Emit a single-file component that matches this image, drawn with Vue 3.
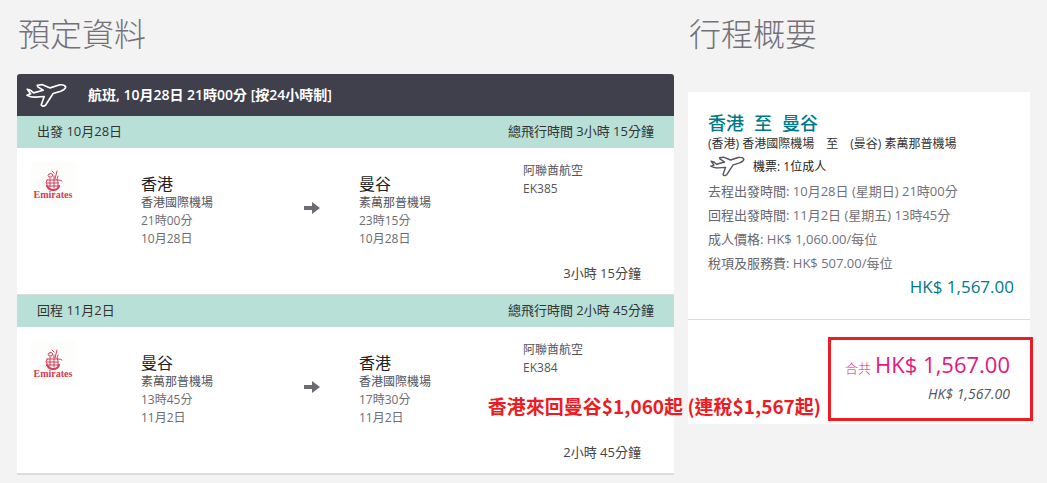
<script setup>
const PLANE = 'M34 56 L45 60 L53 67 L82 59 L66 49 L64 44 L78 42 L103 52 L130 43 Q147 41 150 49 Q149 57 135 62 L112 69 L90 103 Q81 111 76 104 L85 78 L58 80 Q45 81 33 74 L44 70 Z'

const segments = [
    {
        label: '出發 10月28日',
        duration: '3小時 15分鐘',
        airline: '阿聯酋航空',
        flight: 'EK385',
        from: { city: '香港', airport: '香港國際機場', time: '21時00分', date: '10月28日' },
        to: { city: '曼谷', airport: '素萬那普機場', time: '23時15分', date: '10月28日' },
    },
    {
        label: '回程 11月2日',
        duration: '2小時 45分鐘',
        airline: '阿聯酋航空',
        flight: 'EK384',
        from: { city: '曼谷', airport: '素萬那普機場', time: '13時45分', date: '11月2日' },
        to: { city: '香港', airport: '香港國際機場', time: '17時30分', date: '11月2日' },
    },
]

const details = [
    { label: '去程出發時間:', value: '10月28日 (星期日) 21時00分' },
    { label: '回程出發時間:', value: '11月2日 (星期五) 13時45分' },
    { label: '成人價格:', value: 'HK$ 1,060.00/每位' },
    { label: '稅項及服務費:', value: 'HK$ 507.00/每位' },
]
</script>

<template>
    <main class="page">
        <section class="booking">
            <h1 class="heading">預定資料</h1>

            <header class="flight-head">
                <svg class="plane" viewBox="30 38 124 74" aria-hidden="true">
                    <path :d="PLANE" />
                </svg>
                <h2 class="flight-title">航班, 10月28日 21時00分 [按24小時制]</h2>
            </header>

            <article v-for="seg in segments" :key="seg.flight" class="segment">
                <div class="band">
                    <span>{{ seg.label }}</span>
                    <span>總飛行時間 {{ seg.duration }}</span>
                </div>
                <div class="segment-body">
                    <div class="route">
                        <svg class="logo" viewBox="0 0 45 45" role="img" aria-label="Emirates">
                            <rect width="45" height="45" fill="#fdfefc" />
                            <g fill="none" stroke="#d63a55" stroke-linecap="round">
                                <path d="M26 9 L24 17 M21 9 L23 11 M18 12 Q20 10 22 13 Q21 16 18 15 Q16 14 18 12" />
                                <path d="M16 18 H27 Q30 18 31 19 M16 18 Q14 21 16 23 M19 16 V25 M23 14 V26" />
                                <path d="M27 14 Q25 17 27 20 V25 M16 21 H27 M16 24 H28" />
                                <path d="M16 24 Q18 28 22 28 Q27 28 28 24" stroke-width="2" />
                            </g>
                            <text x="22" y="36" text-anchor="middle" class="logo-text">Emirates</text>
                        </svg>
                        <div class="stop">
                            <strong class="city">{{ seg.from.city }}</strong>
                            <span class="airport">{{ seg.from.airport }}</span>
                            <span>{{ seg.from.time }}</span>
                            <span>{{ seg.from.date }}</span>
                        </div>
                        <svg class="arrow" viewBox="0 0 16 14" aria-hidden="true">
                            <path d="M0 5 H8 V1 L16 7 L8 13 V9 H0 Z" />
                        </svg>
                        <div class="stop">
                            <strong class="city">{{ seg.to.city }}</strong>
                            <span class="airport">{{ seg.to.airport }}</span>
                            <span>{{ seg.to.time }}</span>
                            <span>{{ seg.to.date }}</span>
                        </div>
                        <div class="carrier">
                            <span>{{ seg.airline }}</span>
                            <span>{{ seg.flight }}</span>
                        </div>
                    </div>
                    <p class="leg-time">{{ seg.duration }}</p>
                </div>
            </article>
        </section>

        <aside class="overview">
            <h1 class="heading">行程概要</h1>

            <div class="card">
                <div class="trip">
                    <h2 class="trip-title">
                        <span>香港</span>
                        <span>至</span>
                        <span>曼谷</span>
                    </h2>
                    <p class="trip-airports">
                        <span>(香港) 香港國際機場</span>
                        <span>至</span>
                        <span>(曼谷) 素萬那普機場</span>
                    </p>
                    <p class="tickets">
                        <svg class="plane plane-dark" viewBox="30 38 124 74" aria-hidden="true">
                            <path :d="PLANE" />
                        </svg>
                        <span>機票: 1位成人</span>
                    </p>
                    <p v-for="row in details" :key="row.label" class="detail">
                        <span class="detail-label">{{ row.label }}</span> {{ row.value }}
                    </p>
                    <p class="subtotal">HK$ 1,567.00</p>
                </div>
                <div class="total">
                    <p class="total-main">
                        <span class="total-label">合共</span>
                        <strong class="total-price">HK$ 1,567.00</strong>
                    </p>
                    <p class="total-sub">HK$ 1,567.00</p>
                </div>
                <div class="marker" aria-hidden="true"></div>
                <p class="callout">香港來回曼谷$1,060起 (連稅$1,567起)</p>
            </div>
        </aside>
    </main>
</template>

<style>
body {
    margin: 0;
    background: #f3f3f3;
}
</style>

<style scoped>
.page {
    display: grid;
    grid-template-columns: 657fr 342fr;
    gap: 14px;
    align-items: start;
    padding: 12px 17px 8px;
    font-family: 'Open Sans', 'Noto Sans CJK TC', sans-serif;
    font-size: 12px;
    line-height: 18px;
    color: #6d6c73;
}

h1,
h2,
p {
    margin: 0;
}

.heading {
    padding-left: 1px;
    font-size: 32px;
    font-weight: 300;
    line-height: 44px;
    color: #737178;
}

.flight-head {
    display: flex;
    align-items: center;
    gap: 21px;
    height: 42px;
    margin-top: 18px;
    padding-left: 9px;
    background: #403f4c;
    border-radius: 3px 3px 0 0;
}

.plane {
    width: 41px;
    height: 25px;
    fill: none;
    stroke: #fff;
    stroke-width: 5;
    stroke-linejoin: round;
}

.flight-title {
    font-size: 14px;
    font-weight: 600;
    color: #fff;
}

.segment {
    border-bottom: 2px solid #dcdcdc;
    background: #fff;
}

/* the band overlaps the previous divider by one pixel */
.segment + .segment {
    margin-top: -1px;
}

.band {
    display: flex;
    align-items: center;
    justify-content: space-between;
    box-sizing: border-box;
    height: 32px;
    padding: 0 20px 2px;
    background: #b8e0d6;
    font-size: 13px;
    color: #333;
}

.segment-body {
    padding: 14px 0 12px 14px;
}

.route {
    display: grid;
    grid-template-columns: 110fr 163fr 55fr 164fr 151fr;
    align-items: start;
}

.logo {
    width: 45px;
    height: 45px;
}

.logo-text {
    font-family: 'Liberation Serif', serif;
    font-size: 10px;
    font-weight: 700;
    fill: #d63a55;
}

.stop,
.carrier {
    display: flex;
    flex-direction: column;
}

.stop {
    padding-top: 12px;
}

.city {
    font-size: 16px;
    font-weight: 400;
    line-height: 20px;
    color: #222;
}

.airport,
.carrier {
    color: #55545a;
}

.arrow {
    width: 16px;
    height: 14px;
    margin-top: 39px;
    fill: #6d6c73;
}

.leg-time {
    margin-top: 16px;
    padding-right: 33px;
    font-size: 13px;
    text-align: right;
    color: #444;
}

.card {
    position: relative;
    margin-top: 36px;
    background: #fff;
}

.trip {
    padding: 20px 16px 20px 20px;
    border-bottom: 1px solid #dcdcdc;
}

.trip-title,
.trip-airports {
    display: flex;
}

.trip-title {
    gap: 10px;
    font-size: 18px;
    font-weight: 500;
    line-height: 22px;
    color: #007a87;
}

.trip-airports {
    gap: 12px;
    line-height: 20px;
    color: #333;
}

.tickets {
    display: flex;
    align-items: center;
    gap: 8px;
    height: 25px;
    padding-left: 2px;
    color: #222;
}

.plane-dark {
    width: 35px;
    height: 21px;
    stroke: #55545f;
}

.detail {
    font-size: 13px;
    line-height: 24px;
    color: #737178;
}

.detail-label {
    color: #66656c;
}

.subtotal {
    font-size: 17px;
    line-height: 24px;
    text-align: right;
    color: #007a87;
}

.total {
    padding: 28px 20px 20px;
    text-align: right;
}

.total-main {
    display: flex;
    align-items: baseline;
    justify-content: flex-end;
    gap: 4px;
    line-height: 32px;
    color: #e5177b;
}

.total-label {
    font-size: 13px;
    font-weight: 300;
}

.total-price {
    font-size: 22px;
    font-weight: 400;
}

.total-sub {
    font-size: 14px;
    font-style: italic;
    line-height: 20px;
    color: #55545a;
}

.marker {
    position: absolute;
    right: -3px;
    bottom: 3px;
    width: 199px;
    height: 78px;
    border: 3px solid #ed1c24;
}

.callout {
    position: absolute;
    right: 209px;
    bottom: 4px;
    font-family: 'Noto Sans CJK TC', sans-serif;
    font-size: 19px;
    font-weight: 700;
    line-height: 28px;
    white-space: nowrap;
    color: #ed1c24;
}
</style>
